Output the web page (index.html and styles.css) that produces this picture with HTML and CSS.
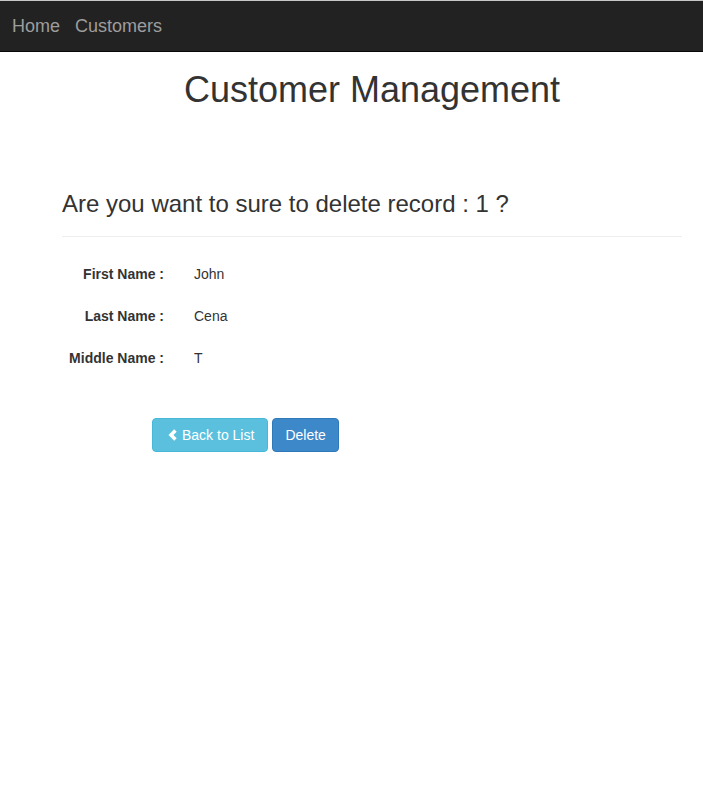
FILE: index.html
```html
<!DOCTYPE html>
<html>
<head>
<meta charset="utf-8">
<link rel="stylesheet" href="styles.css">
</head>
<body>
<nav class="navbar">
  <a class="nav-link" href="#">Home</a>
  <a class="nav-link" href="#">Customers</a>
</nav>
<main class="page">
  <h1 class="title">Customer Management</h1>
  <h3 class="question">Are you want to sure to delete record : 1 ?</h3>
  <hr class="divider">
  <div class="details">
    <div class="label">First Name :</div><div class="value">John</div>
    <div class="label">Last Name :</div><div class="value">Cena</div>
    <div class="label">Middle Name :</div><div class="value">T</div>
  </div>
  <div class="actions">
    <button class="btn btn-info"><svg class="chev" viewBox="0 0 10 12" width="10" height="12"><path d="M7.2 0.3 L9.7 2.8 L6.4 6 L9.7 9.2 L7.2 11.7 L1.5 6 Z" fill="#fff"/></svg>Back to List</button>
    <button class="btn btn-primary">Delete</button>
  </div>
</main>
</body>
</html>
```
FILE: styles.css
```css
* { box-sizing: border-box; }
body {
  margin: 0;
  font-family: "Liberation Sans", Arial, sans-serif;
  font-size: 14px;
  line-height: 1.42857;
  color: #333;
  background: #fff;
}
.navbar {
  height: 52px;
  background: #222;
  border-top: 1px solid #c8c8c8;
  border-bottom: 1px solid #080808;
  display: flex;
  align-items: center;
  padding-left: 12px;
  gap: 15px;
}
.nav-link {
  color: #9d9d9d;
  text-decoration: none;
  font-size: 18px;
  line-height: 20px;
}
.page {
  margin-left: 62px;
  width: 620px;
}
.title {
  font-size: 36px;
  font-weight: 500;
  line-height: 1.1;
  text-align: center;
  margin: 18px 0 0;
}
.question {
  font-size: 24px;
  font-weight: 500;
  line-height: 1.1;
  margin: 81px 0 0;
}
.divider {
  border: 0;
  border-top: 1px solid #eee;
  margin: 19px 0 0;
}
.details {
  display: grid;
  grid-template-columns: 102px auto;
  column-gap: 30px;
  row-gap: 22px;
  margin-top: 27px;
}
.label {
  font-weight: bold;
  text-align: right;
  line-height: 20px;
}
.value {
  line-height: 20px;
}
.actions {
  display: flex;
  gap: 4px;
  margin: 50px 0 0 90px;
}
.btn {
  font-family: inherit;
  font-size: 14px;
  line-height: 20px;
  height: 34px;
  padding: 6px 12px;
  border-radius: 4px;
  border: 1px solid transparent;
  color: #fff;
  display: inline-flex;
  align-items: center;
  gap: 5px;
  cursor: pointer;
}
.btn-info {
  background: #5bc0de;
  border-color: #46b8da;
  padding: 6px 13px 6px 14px;
}
.btn-primary {
  background: #3c88c8;
  border-color: #2f79b9;
  padding: 6px 12px;
}
.chev { display: block; }
```
